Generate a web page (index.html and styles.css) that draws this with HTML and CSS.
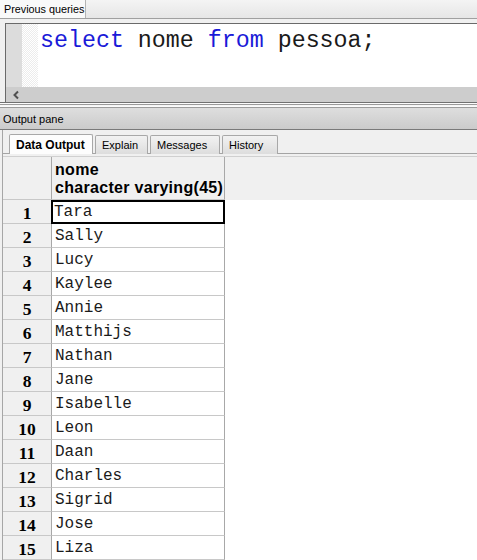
FILE: index.html
```html
<!DOCTYPE html>
<html>
<head>
<meta charset="utf-8">
<link rel="stylesheet" href="styles.css">
</head>
<body>
<div class="app">
  <div class="top-strip">
    <div class="top-tab">Previous queries</div>
  </div>
  <div class="editor-frame">
    <div class="editor">
      <div class="editor-body">
        <div class="gutter"></div>
        <div class="fold"></div>
        <div class="code"><span class="kw">select</span> nome <span class="kw">from</span> pessoa;</div>
      </div>
      <div class="hscroll">
        <svg class="arrow" width="8" height="10" viewBox="0 0 8 10"><path d="M6 1.5 L2.5 5 L6 8.5" fill="none" stroke="#505050" stroke-width="2"/></svg>
      </div>
    </div>
  </div>
  <div class="sash"></div>
  <div class="pane-title">Output pane</div>
  <div class="output">
    <div class="tabs">
      <div class="tab active">Data Output</div>
      <div class="tab t-explain">Explain</div>
      <div class="tab t-messages">Messages</div>
      <div class="tab t-history">History</div>
    </div>
    <div class="grid">
      <div class="grid-head">
        <div class="corner"></div>
        <div class="colhead">nome<br>character varying(45)</div>
        <div class="headfill"></div>
      </div>
      <div class="row"><div class="rn">1</div><div class="cell sel">Tara</div></div>
      <div class="row"><div class="rn">2</div><div class="cell">Sally</div></div>
      <div class="row"><div class="rn">3</div><div class="cell">Lucy</div></div>
      <div class="row"><div class="rn">4</div><div class="cell">Kaylee</div></div>
      <div class="row"><div class="rn">5</div><div class="cell">Annie</div></div>
      <div class="row"><div class="rn">6</div><div class="cell">Matthijs</div></div>
      <div class="row"><div class="rn">7</div><div class="cell">Nathan</div></div>
      <div class="row"><div class="rn">8</div><div class="cell">Jane</div></div>
      <div class="row"><div class="rn">9</div><div class="cell">Isabelle</div></div>
      <div class="row"><div class="rn">10</div><div class="cell">Leon</div></div>
      <div class="row"><div class="rn">11</div><div class="cell">Daan</div></div>
      <div class="row"><div class="rn">12</div><div class="cell">Charles</div></div>
      <div class="row"><div class="rn">13</div><div class="cell">Sigrid</div></div>
      <div class="row"><div class="rn">14</div><div class="cell">Jose</div></div>
      <div class="row"><div class="rn">15</div><div class="cell">Liza</div></div>
    </div>
  </div>
</div>
</body>
</html>
```

FILE: styles.css
```css
* { box-sizing: border-box; }
html, body { margin: 0; padding: 0; }
body {
  width: 477px;
  height: 560px;
  overflow: hidden;
  background: #f0f0f0;
  font-family: "Liberation Sans", Arial, sans-serif;
}
.app { display: flex; flex-direction: column; width: 477px; height: 560px; }

.top-strip {
  height: 19px;
  background: linear-gradient(#f4f4f4, #e6e6e6);
  border-bottom: 1px solid #a0a0a0;
  display: flex;
}
.top-tab {
  width: 86px;
  height: 18px;
  background: #f9f9f9;
  border-right: 1px solid #b4b4b4;
  font-size: 10.8px;
  line-height: 19px;
  padding-left: 4px;
  color: #000;
  white-space: nowrap;
}

.editor-frame {
  background: #f0f0f0;
  padding: 4px 0 0 5px;
  border-bottom: 1px solid #707070;
}
.editor {
  border-top: 1px solid #6a6a6a;
  border-left: 1px solid #6a6a6a;
  background: #fff;
}
.editor-body { display: flex; height: 63px; }
.gutter { width: 16px; background: #dcdcdc; }
.fold {
  width: 16px;
  background-color: #fff;
  background-image: repeating-conic-gradient(#ececec 0 25%, #fff 0 50%);
  background-size: 2px 2px;
}
.code {
  padding: 4px 0 0 2px;
  font-family: "Liberation Mono", "Courier New", monospace;
  font-size: 23.3px;
  line-height: 26px;
  color: #1a1a1a;
  white-space: pre;
}
.kw { color: #1a1ad8; }
.hscroll {
  height: 15px;
  background: #cdcdcd;
  display: flex;
  align-items: center;
}
.arrow { margin-left: 6px; display: block; }

.sash {
  height: 8px;
  background: repeating-linear-gradient(#fbfbfb 0 1px, #9a9a9a 1px 2px, #f6f6f6 2px 3px);
  border-bottom: 1px solid #9c9c9c;
}
.pane-title {
  height: 22px;
  background: linear-gradient(#dedede, #cbcbcb);
  border-bottom: 1px solid #7a7a7a;
  font-size: 11px;
  line-height: 22px;
  padding-left: 3px;
  color: #000;
}

.output {
  flex: 1;
  margin-left: 2px;
  border-left: 1px solid #a6a6a6;
  background: #f0f0f0;
  display: flex;
  flex-direction: column;
}
.tabs {
  display: flex;
  gap: 2px;
  padding: 4px 0 0 6px;
  height: 24px;
  border-bottom: 1px solid #a4a4a4;
}
.tab {
  height: 19px;
  padding: 0 6px;
  font-size: 11px;
  line-height: 19px;
  color: #000;
  border: 1px solid #a8a8a8;
  border-bottom: none;
  border-radius: 2px 2px 0 0;
  background: linear-gradient(#f2f2f2, #dddddd);
  margin-top: 1px;
  white-space: nowrap;
}
.t-explain { width: 53px; }
.t-messages { width: 70px; }
.t-history { width: 56px; }
.tab.active {
  width: 84px;
  height: 20px;
  margin-top: 0;
  background: #fdfdfd;
  font-weight: bold;
  font-size: 12px;
  line-height: 20px;
  padding-left: 6px;
}

.grid {
  margin-top: 2px;
  flex: 1;
  background: #fff;
  border-top: 1px solid #d0d0d0;
}
.grid-head { display: flex; height: 43px; background: #f0f0f0; }
.corner {
  width: 49px;
  border-right: 1px solid #a8a8a8;
  border-bottom: 1px solid #c8c8c8;
}
.colhead {
  width: 173px;
  border-right: 1px solid #a8a8a8;
  border-bottom: 1px solid #c8c8c8;
  font-weight: bold;
  font-size: 16px;
  letter-spacing: 0.3px;
  line-height: 18px;
  padding: 4px 0 0 3px;
  white-space: nowrap;
  color: #000;
}
.headfill { flex: 1; }

.row { display: flex; height: 24px; }
.rn {
  width: 49px;
  background: #f0f0f0;
  border-right: 1px solid #a8a8a8;
  border-bottom: 1px solid #c8c8c8;
  font-family: "Liberation Serif", "Times New Roman", serif;
  font-weight: bold;
  font-size: 17.5px;
  line-height: 22px;
  padding-top: 2px;
  text-align: center;
  color: #000;
}
.cell {
  width: 173px;
  border-right: 1px solid #a8a8a8;
  border-bottom: 1px solid #c8c8c8;
  font-family: "Liberation Mono", "Courier New", monospace;
  font-size: 16px;
  line-height: 22px;
  padding: 1px 0 0 3px;
  color: #1a1a1a;
}
.cell.sel {
  border: 2px solid #000;
  line-height: 20px;
  padding: 0 0 0 1px;
  margin-left: -1px;
  width: 174px;
}
```
